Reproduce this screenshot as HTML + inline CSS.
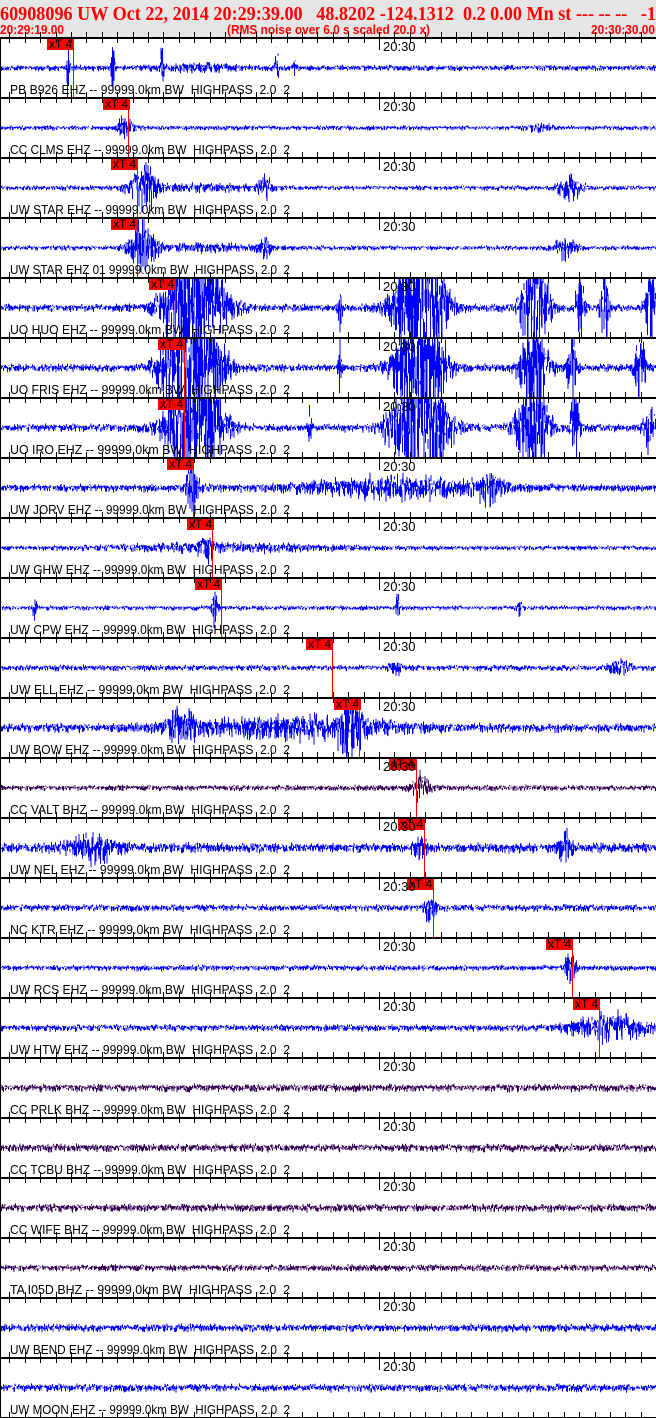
<!DOCTYPE html>
<html><head><meta charset="utf-8"><style>
html,body{margin:0;padding:0;background:#fff;}
body{width:656px;height:1418px;overflow:hidden;position:relative;}
#hdr{position:absolute;left:0;top:0;width:656px;height:37px;background:#e6e6e6;}
svg{position:absolute;left:0;top:0;}
text{white-space:pre;}
</style></head><body>
<div id="hdr"></div>
<svg id="s" width="656" height="1418" xmlns="http://www.w3.org/2000/svg">
<text x="0" y="20" font-family="Liberation Serif,serif" font-weight="bold" font-size="20" fill="#ff0000" textLength="656" lengthAdjust="spacingAndGlyphs">60908096 UW Oct 22, 2014 20:29:39.00   48.8202 -124.1312  0.2 0.00 Mn st --- -- --   -1</text>
<text x="0" y="34" font-family="Liberation Sans,sans-serif" font-weight="bold" font-size="12.5" fill="#ff0000" textLength="64" lengthAdjust="spacingAndGlyphs">20:29:19.00</text>
<text x="227" y="34" font-family="Liberation Sans,sans-serif" font-weight="bold" font-size="12.5" fill="#ff0000" textLength="203" lengthAdjust="spacingAndGlyphs">(RMS noise over 6.0 s scaled 20.0 x)</text>
<text x="591" y="34" font-family="Liberation Sans,sans-serif" font-weight="bold" font-size="12.5" fill="#ff0000" textLength="64" lengthAdjust="spacingAndGlyphs">20:30:30.00</text>
<g id="g"></g>
</svg>
<script>
var NS="http://www.w3.org/2000/svg",g=document.getElementById('g');
function el(t,a,txt){var e=document.createElementNS(NS,t);for(var k in a)e.setAttribute(k,a[k]);if(txt!=null)e.textContent=txt;g.appendChild(e);return e;}
var seed=12345;function rnd(){seed=(seed*1103515245+12345)%2147483648;return seed/2147483648;}
var B='#0000ff',P='#330055';
var T=[
["PB B926 EHZ --",B,3,[[68,1.5,40],[113,1.5,40],[162,1.5,30],[277,1.5,35],[295,1.5,12],[200,40,3]],[47,73]],
["CC CLMS EHZ --",B,2.5,[[125,8,10],[540,10,4]],[103,128]],
["UW STAR EHZ --",B,2.5,[[143,12,26],[265,6,10],[570,12,12],[200,60,3]],[111,137]],
["UW STAR EHZ 01",B,2.5,[[143,12,28],[265,6,10],[565,12,10],[200,60,3]],[111,137]],
["UO HUO EHZ --",B,4,[[195,26,90],[420,22,90],[535,12,70],[580,4,50],[605,4,50],[650,5,50],[340,2,25]],[149,175]],
["UO FRIS EHZ --",B,4,[[192,26,90],[420,22,90],[535,12,70],[572,4,50],[640,5,40],[340,2,25]],[158,184]],
["UO IRO EHZ --",B,4,[[195,24,90],[420,24,90],[532,14,70],[575,4,45],[650,5,40],[310,2,20]],[158,184]],
["UW JORV EHZ --",B,4,[[192,6,26],[400,90,10],[490,10,16]],[167,193]],
["UW GHW EHZ --",B,2.5,[[207,8,10],[220,100,4]],[187,212]],
["UW CPW EHZ --",B,2.5,[[35,2,14],[215,3,20],[398,2,14],[520,2,10]],[195,221]],
["UW ELL EHZ --",B,3,[[395,6,8],[620,10,8]],[306,332]],
["UW BOW EHZ --",B,4.5,[[180,15,16],[350,10,28],[300,100,10]],[334,359]],
["CC VALT BHZ --",P,3,[[420,8,16]],[389,416]],
["UW NEL EHZ --",B,5,[[95,25,13],[420,6,14],[565,6,16]],[398,424]],
["NC KTR EHZ --",B,3.5,[[430,6,14]],[407,433]],
["UW RCS EHZ --",B,3,[[570,6,16]],[546,572]],
["UW HTW EHZ --",B,3.5,[[610,35,14]],[573,599]],
["CC PRLK BHZ --",P,4,[],null],
["CC TCBU BHZ --",P,4,[],null],
["CC WIFE BHZ --",P,4,[],null],
["TA I05D BHZ --",P,3.5,[],null],
["UW BEND EHZ --",B,4,[],null],
["UW MOON EHZ --",B,4,[],null]];
var tickx=[];for(var x=9.4;x<656;x+=15.4)tickx.push(x);
for(var i=0;i<T.length;i++){
 var y0=37+60*i,t=T[i],c=y0+31;
 var d="";for(var x=1;x<656;x+=0.5){var a=t[2];
  for(var j=0;j<t[3].length;j++){var b=t[3][j];var z=(x-b[0])/b[1];a+=b[2]*Math.exp(-z*z);}
  var v1=(rnd()-0.5)*2*a*(0.6+rnd()*0.6),v2=-(rnd()-0.2)*a*0.8;
  v1=Math.max(-29,Math.min(29,v1));v2=Math.max(-29,Math.min(29,v2));
  d+="M"+x+" "+(c+v1).toFixed(1)+"L"+x+" "+(c+v2).toFixed(1);}
 el('path',{d:d,stroke:t[1],'stroke-width':1,fill:'none'});
 if(t[4]){el('line',{x1:t[4][1]+0.5,y1:y0+1,x2:t[4][1]+0.5,y2:y0+60,stroke:'#ff0000','stroke-width':1});
  el('rect',{x:t[4][0],y:y0+1,width:27,height:12,fill:'#ff0000'});
  el('text',{x:t[4][0]+2,y:y0+11,'font-family':'Liberation Sans,sans-serif','font-size':12,fill:'#000'},'xT 4');}
 el('text',{x:10,y:y0+57,'font-family':'Liberation Sans,sans-serif','font-size':13,fill:'#000',textLength:280,lengthAdjust:'spacingAndGlyphs'},t[0]+" 99999.0km BW  HIGHPASS  2.0  2");
 el('text',{x:383,y:y0+14,'font-family':'Liberation Sans,sans-serif','font-size':13,fill:'#000'},'20:30');
}
for(var i=0;i<=23;i++){var y0=37+60*i;
 el('rect',{x:0,y:y0,width:656,height:2,fill:'#000'});
 for(var k=0;k<tickx.length;k++){var x=Math.round(tickx[k])+0.5;
  el('line',{x1:x,y1:y0-5,x2:x,y2:y0+(Math.abs(tickx[k]-379)<3?13:6),stroke:'#000','stroke-width':1});}
}
el('rect',{x:0,y:37,width:1,height:1381,fill:'#000'});
</script>
</body></html>
